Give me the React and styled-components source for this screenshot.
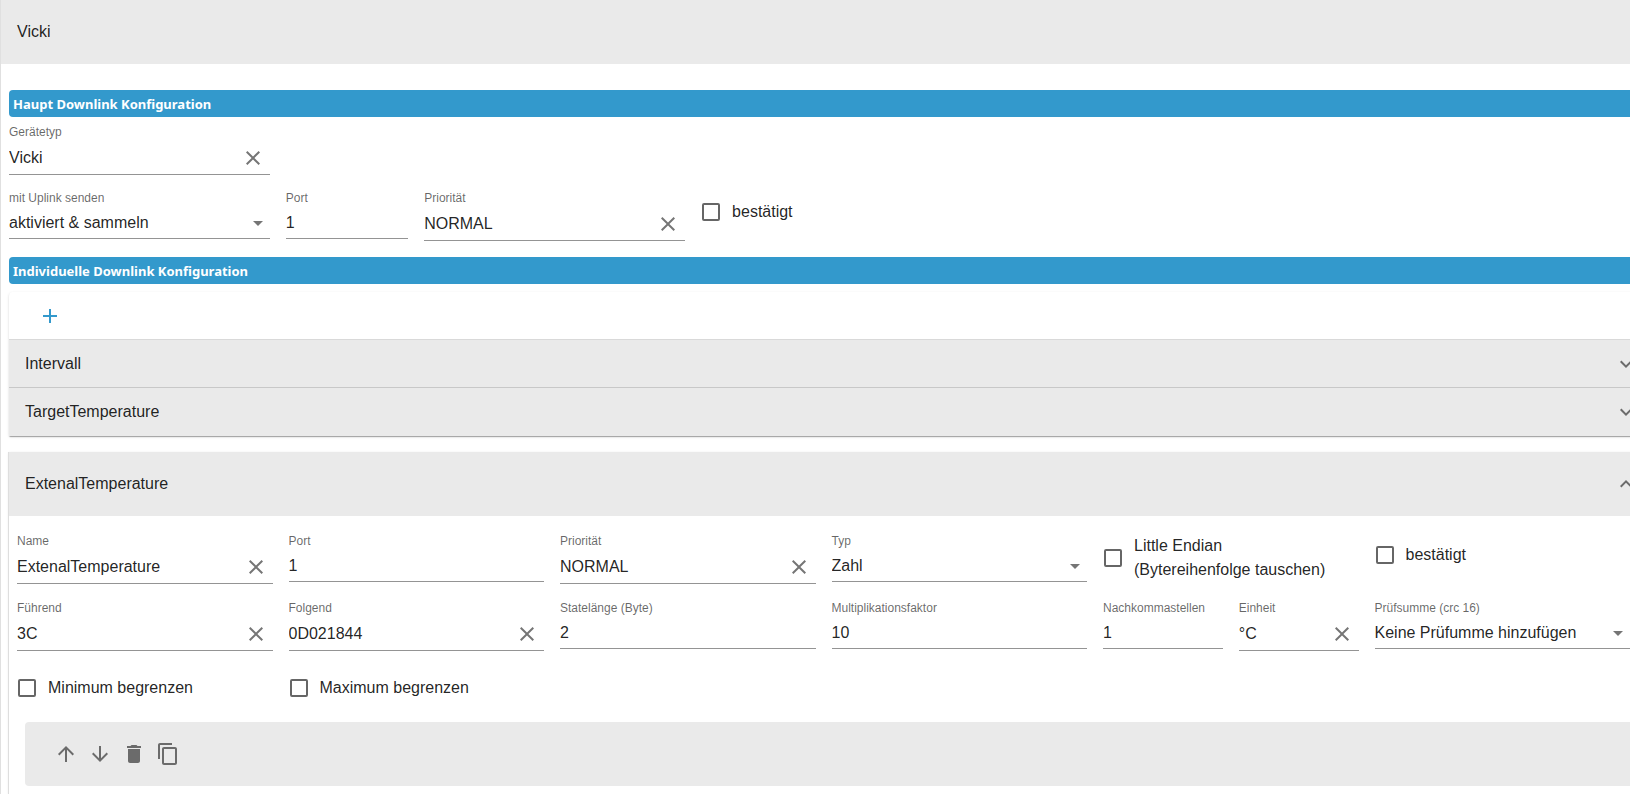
import React, { useId, useState } from "react";
import styled, { createGlobalStyle } from "styled-components";
import {
  MdAdd,
  MdArrowDownward,
  MdArrowDropDown,
  MdArrowUpward,
  MdClose,
  MdContentCopy,
  MdDelete,
  MdExpandLess,
  MdExpandMore,
} from "react-icons/md";

const GlobalStyle = createGlobalStyle`
  * {
    box-sizing: border-box;
  }
  body {
    margin: 0;
    background: white;
    color: rgba(0, 0, 0, 0.87);
    font-family: "Liberation Sans", Arial, sans-serif;
    font-size: 16px;
    line-height: 24px;
  }
  button, input, select {
    font: inherit;
    color: inherit;
  }
`;

const Page = styled.div`
  min-height: 100vh;
  overflow-x: clip;
  display: flex;
`;

/* the panel is wider than the window, its right edge is cut off */
const Panel = styled.main`
  flex: 1;
  min-width: 0;
  display: flex;
  flex-direction: column;
  border-left: 1px solid #e0e0e0;
`;

const PanelHeader = styled.header`
  height: 64px;
  padding: 0 16px;
  margin-right: -24px;
  display: flex;
  align-items: center;
  background-color: #eaeaea;
`;

const PanelBody = styled.div`
  flex: 1;
  margin: 26px -24px 0 8px;
  display: flex;
  flex-direction: column;
`;

const SectionTitle = styled.h2`
  margin: 0 0 8px;
  padding: 1px 4px 0;
  border-radius: 4px;
  background-color: #3399cc;
  color: white;
  font-family: "Noto Sans", "Open Sans", sans-serif;
  font-size: 13px;
  font-weight: bold;
  line-height: 26px;
`;

const Grid = styled.div`
  display: grid;
  grid-template-columns: repeat(12, minmax(0, 1fr));
  gap: 16px;
  align-items: start;
  margin-bottom: ${(props) => props.$bottom};
  margin-right: ${(props) => props.$right || "0"};
`;

const Cell = styled.div`
  grid-column: ${(props) => (props.$newRow ? "1 / " : "")} span
    ${(props) => props.$span};
`;

const Label = styled.label`
  display: block;
  margin-bottom: 2px;
  color: rgba(0, 0, 0, 0.6);
  font-size: 12px;
  line-height: 14px;
  white-space: nowrap;
`;

const InputRow = styled.div`
  position: relative;
  display: flex;
  align-items: center;
  height: ${(props) => (props.$tall ? "34px" : "32px")};
  padding-right: ${(props) => (props.$tall ? "5px" : "0")};
  border-bottom: 1px solid rgba(0, 0, 0, 0.42);
`;

const Input = styled.input`
  flex: 1;
  min-width: 0;
  height: 100%;
  padding: 0;
  border: 0;
  outline: 0;
  background: none;
`;

const Select = styled.select`
  appearance: none;
  width: 100%;
  height: 100%;
  padding: 0 24px 0 0;
  border: 0;
  outline: 0;
  background: none;
`;

const SelectArrow = styled(MdArrowDropDown)`
  position: absolute;
  right: 0;
  width: 24px;
  height: 24px;
  color: rgba(0, 0, 0, 0.54);
  pointer-events: none;
`;

const ClearButton = styled.button`
  display: flex;
  padding: 0;
  border: 0;
  background: none;
  color: rgba(0, 0, 0, 0.54);
  cursor: pointer;
`;

const CheckLabel = styled.label`
  display: flex;
  align-items: center;
  gap: 12px;
  min-height: 42px;
  padding-left: 1px;
  cursor: pointer;
`;

const Checkbox = styled.input`
  appearance: none;
  flex: none;
  width: 18px;
  height: 18px;
  margin: 0;
  border: 2px solid rgba(0, 0, 0, 0.6);
  border-radius: 2px;
  &:checked {
    border-color: #3399cc;
    background-color: #3399cc;
  }
`;

const Paper = styled.section`
  border-radius: 4px 4px 0 0;
  margin-bottom: 16px;
  background-color: white;
  box-shadow: 0 2px 1px -1px rgba(0, 0, 0, 0.2),
    0 1px 1px rgba(0, 0, 0, 0.14), 0 1px 3px rgba(0, 0, 0, 0.12);
`;

const OpenPaper = styled(Paper)`
  flex: 1;
  border-radius: 0;
  margin-bottom: 0;
  box-shadow: -1px 0 0 #dedede, 0 1px 3px rgba(0, 0, 0, 0.12);
`;

const AddBar = styled.div`
  height: 48px;
  padding: 0 24px;
  display: flex;
  align-items: center;
  border-bottom: 1px solid #d9d9d9;
`;

const IconButton = styled.button`
  display: flex;
  padding: 5px;
  border: 0;
  background: none;
  color: ${(props) => props.$color || "rgba(0, 0, 0, 0.54)"};
  cursor: pointer;
`;

const Summary = styled.button`
  width: 100%;
  height: ${(props) => (props.$open ? "64px" : "48px")};
  padding: 0 16px;
  display: flex;
  align-items: center;
  justify-content: space-between;
  border: 0;
  background-color: #eaeaea;
  text-align: left;
  cursor: pointer;
  &:not(:last-child) {
    border-bottom: ${(props) => (props.$open ? "0" : "1px solid #c8c8c8")};
  }
  svg {
    flex: none;
    color: rgba(0, 0, 0, 0.54);
  }
`;

const Details = styled.div`
  padding: 18px 8px 8px;
`;

const ActionBar = styled.div`
  height: 64px;
  margin: 0 8px;
  padding: 0 24px;
  display: flex;
  align-items: center;
  border-radius: 4px;
  background-color: #eaeaea;
`;

const TextField = ({ label, initial, span, clearable }) => {
  const id = useId();
  const [value, setValue] = useState(initial);
  return (
    <Cell $span={span}>
      <Label htmlFor={id}>{label}</Label>
      <InputRow $tall={clearable}>
        <Input
          id={id}
          type="text"
          value={value}
          onChange={(e) => setValue(e.target.value)}
        />
        {clearable && (
          <ClearButton
            type="button"
            aria-label={`${label} leeren`}
            onClick={() => setValue("")}
          >
            <MdClose size={24} />
          </ClearButton>
        )}
      </InputRow>
    </Cell>
  );
};

const SelectField = ({ label, option, span }) => {
  const id = useId();
  return (
    <Cell $span={span}>
      <Label htmlFor={id}>{label}</Label>
      <InputRow>
        <Select id={id}>
          <option>{option}</option>
        </Select>
        <SelectArrow />
      </InputRow>
    </Cell>
  );
};

const CheckField = ({ span, newRow, children }) => {
  return (
    <Cell $span={span} $newRow={newRow}>
      <CheckLabel>
        <Checkbox type="checkbox" />
        <span>{children}</span>
      </CheckLabel>
    </Cell>
  );
};

const App = () => {
  const [open, setOpen] = useState(true);
  return (
    <Page>
      <GlobalStyle />
      <Panel>
        <PanelHeader>Vicki</PanelHeader>
        <PanelBody>
          <SectionTitle>Haupt Downlink Konfiguration</SectionTitle>
          <Grid $bottom="16px">
            <TextField label="Gerätetyp" initial="Vicki" span={2} clearable />
          </Grid>
          <Grid $bottom="16px">
            <SelectField
              label="mit Uplink senden"
              option="aktiviert & sammeln"
              span={2}
            />
            <TextField label="Port" initial="1" span={1} />
            <TextField label="Priorität" initial="NORMAL" span={2} clearable />
            <CheckField span={2}>bestätigt</CheckField>
          </Grid>

          <SectionTitle>Individuelle Downlink Konfiguration</SectionTitle>
          <Paper>
            <AddBar>
              <IconButton type="button" aria-label="Hinzufügen" $color="#3399cc">
                <MdAdd size={24} />
              </IconButton>
            </AddBar>
            <Summary type="button">
              Intervall
              <MdExpandMore size={24} />
            </Summary>
            <Summary type="button">
              TargetTemperature
              <MdExpandMore size={24} />
            </Summary>
          </Paper>

          <OpenPaper>
            <Summary type="button" $open={open} onClick={() => setOpen(!open)}>
              ExtenalTemperature
              {open ? <MdExpandLess size={24} /> : <MdExpandMore size={24} />}
            </Summary>
            {open && (
              <Details>
                <Grid $bottom="17px" $right="16px">
                  <TextField
                    label="Name"
                    initial="ExtenalTemperature"
                    span={2}
                    clearable
                  />
                  <TextField label="Port" initial="1" span={2} />
                  <TextField
                    label="Priorität"
                    initial="NORMAL"
                    span={2}
                    clearable
                  />
                  <SelectField label="Typ" option="Zahl" span={2} />
                  <CheckField span={2}>
                    Little Endian
                    <br />
                    (Bytereihenfolge tauschen)
                  </CheckField>
                  <CheckField span={2}>bestätigt</CheckField>
                </Grid>
                <Grid $bottom="16px" $right="16px">
                  <TextField label="Führend" initial="3C" span={2} clearable />
                  <TextField
                    label="Folgend"
                    initial="0D021844"
                    span={2}
                    clearable
                  />
                  <TextField label="Statelänge (Byte)" initial="2" span={2} />
                  <TextField
                    label="Multiplikationsfaktor"
                    initial="10"
                    span={2}
                  />
                  <TextField label="Nachkommastellen" initial="1" span={1} />
                  <TextField label="Einheit" initial="°C" span={1} clearable />
                  <SelectField
                    label="Prüfsumme (crc 16)"
                    option="Keine Prüfumme hinzufügen"
                    span={2}
                  />
                </Grid>
                <Grid $bottom="13px" $right="16px">
                  <CheckField span={2}>Minimum begrenzen</CheckField>
                  <CheckField span={2}>Maximum begrenzen</CheckField>
                </Grid>
                <ActionBar>
                  <IconButton type="button" aria-label="Nach oben">
                    <MdArrowUpward size={24} />
                  </IconButton>
                  <IconButton type="button" aria-label="Nach unten">
                    <MdArrowDownward size={24} />
                  </IconButton>
                  <IconButton type="button" aria-label="Löschen">
                    <MdDelete size={24} />
                  </IconButton>
                  <IconButton type="button" aria-label="Kopieren">
                    <MdContentCopy size={24} />
                  </IconButton>
                </ActionBar>
              </Details>
            )}
          </OpenPaper>
        </PanelBody>
      </Panel>
    </Page>
  );
};

export default App;
